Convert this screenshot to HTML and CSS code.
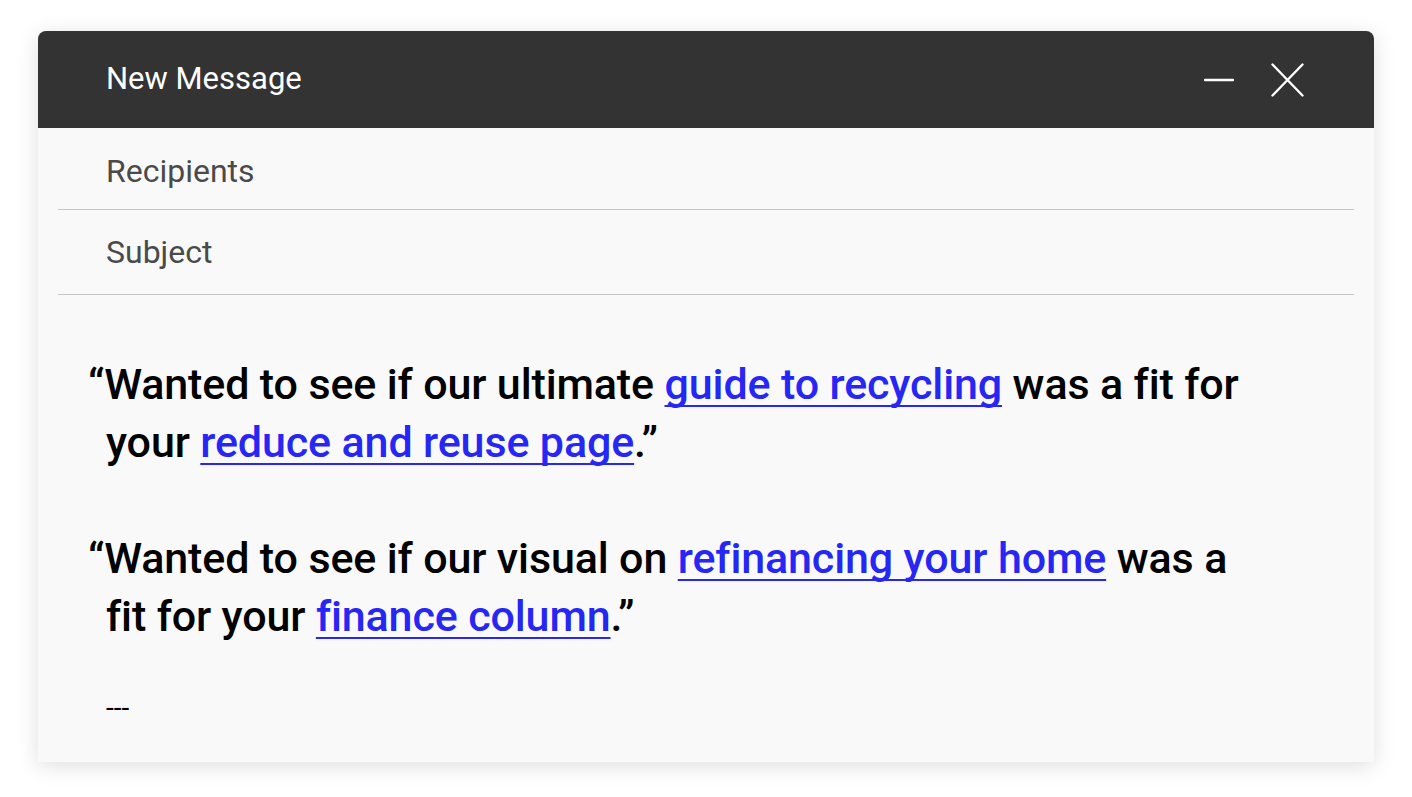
FILE: index.html
```html
<!DOCTYPE html>
<html lang="en">
<head>
<meta charset="utf-8">
<title>New Message</title>
<link rel="stylesheet" href="styles.css">
</head>
<body>
<div class="page">
  <div class="window">
    <div class="titlebar">
      <div class="title">New Message</div>
      <div class="controls">
        <svg class="icon-min" width="30" height="4" viewBox="0 0 30 4"><line x1="1" y1="2" x2="29" y2="2" stroke="#fff" stroke-width="2.4" stroke-linecap="round"/></svg>
        <svg class="icon-close" width="33" height="34" viewBox="0 0 33 34"><path d="M1.5 1.5 L31.5 32.5 M31.5 1.5 L1.5 32.5" stroke="#fff" stroke-width="2.4" stroke-linecap="round" fill="none"/></svg>
      </div>
    </div>
    <div class="fields">
      <div class="field field-recipients">Recipients</div>
      <div class="field field-subject">Subject</div>
    </div>
    <div class="message">
      <p class="quote">“Wanted to see if our ultimate <a href="#">guide to recycling</a> was a fit for your <a href="#">reduce and reuse page</a>.”</p>
      <p class="quote">“Wanted to see if our visual on <a href="#">refinancing your home</a> was a fit for your <a href="#">finance column</a>.”</p>
      <div class="sign">---</div>
    </div>
  </div>
</div>
</body>
</html>
```

FILE: styles.css
```css
html, body {
  margin: 0;
  padding: 0;
  background: #ffffff;
}

body {
  font-family: Roboto, "Liberation Sans", Arial, sans-serif;
}

.page {
  padding: 31px 38px 35px 38px;
}

.window {
  width: 1336px;
  height: 731px;
  background: #f9f9f9;
  border-radius: 8px 8px 0 0;
  box-shadow: 0 4px 22px rgba(0, 0, 0, 0.13);
  display: flex;
  flex-direction: column;
}

.titlebar {
  height: 97px;
  background: #333333;
  border-radius: 8px 8px 0 0;
  display: flex;
  align-items: center;
  justify-content: space-between;
  padding: 0 70px 0 68px;
}

.title {
  color: #ffffff;
  font-size: 31px;
  font-weight: 400;
  padding-bottom: 2px;
}

.controls {
  display: flex;
  align-items: center;
  gap: 37px;
}

.icon-min,
.icon-close {
  display: block;
}

.fields {
  margin: 0 20px;
}

.field {
  display: flex;
  align-items: center;
  padding-left: 48px;
  color: #4a4a4a;
  font-size: 32px;
  border-bottom: 1px solid #c6c6c6;
  box-sizing: border-box;
}

.field-recipients {
  height: 82px;
  padding-top: 4px;
}

.field-subject {
  height: 85px;
}

.message {
  padding: 60px 124px 0 68px;
}

.quote {
  margin: 0;
  font-size: 43px;
  font-weight: 500;
  line-height: 58px;
  letter-spacing: -0.13px;
  color: #000000;
  text-indent: -18px;
}

.quote + .quote {
  margin-top: 58px;
}

.quote a {
  color: #2626f5;
  text-decoration: underline;
  text-decoration-thickness: 2px;
  text-underline-offset: 6px;
  text-decoration-skip-ink: none;
}

.sign {
  margin-top: 51px;
  font-size: 28px;
  line-height: 24px;
  color: #000000;
}
```
